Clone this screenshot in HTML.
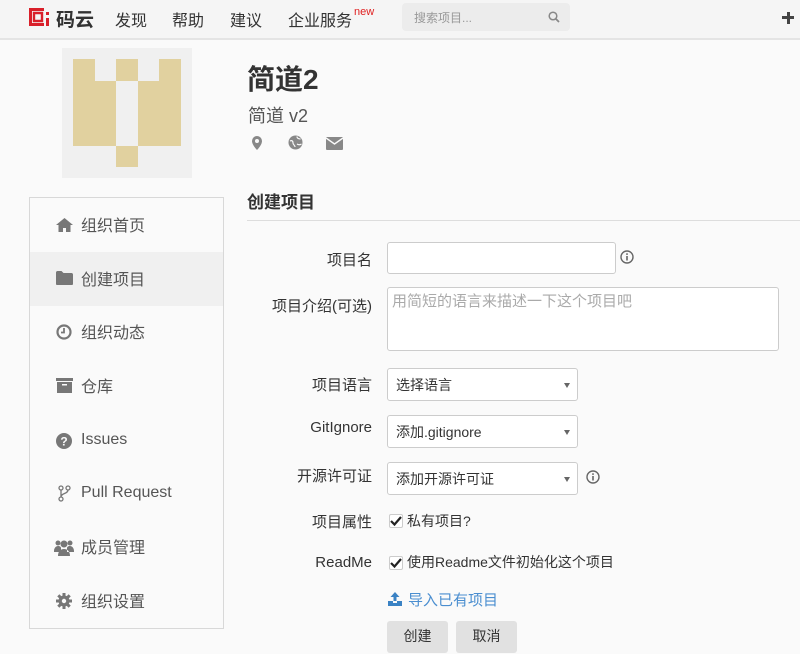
<!DOCTYPE html>
<html><head><meta charset="utf-8"><style>
*{box-sizing:border-box;margin:0;padding:0}
body{width:800px;height:654px;overflow:hidden;background:#fafafa;font-family:"Liberation Sans","Noto Sans CJK SC",sans-serif;color:#333;position:relative}
.a{position:absolute;white-space:nowrap}
.hdr{position:absolute;left:0;top:0;width:800px;height:40px;background:#f5f5f5;border-bottom:2px solid #e4e4e4}
.nav{font-size:16px;color:#333;top:7px}
.side{position:absolute;left:29px;top:197px;width:195px;height:432px;border:1px solid #d8d8d8;background:#fafafa}
.item{position:absolute;left:0;width:193px;height:54px;font-size:16px;color:#555}
.item span{position:absolute;left:51px;top:14px}
.item span.l{top:18px}
.item svg{position:absolute;left:26px;top:19px}
.lbl{font-size:15px;color:#333;text-align:right;width:140px;left:232px}
.inp{position:absolute;border:1px solid #ccc;border-radius:3px;background:#fff}
.sel{position:absolute;left:387px;width:191px;height:33px;border:1px solid #ccc;border-radius:3px;background:#fff;font-size:14px;color:#333;padding:6px 8px}
.sel:after{content:"";position:absolute;right:7px;top:14px;border-left:3px solid transparent;border-right:3px solid transparent;border-top:5px solid #666}
.cb{position:absolute;width:14px;height:14px;border:1px solid #ccc;border-radius:2px;background:#fff}
.btn{position:absolute;top:621px;height:32px;width:61px;background:#e1e1e1;border-radius:3px;font-size:14px;color:#333;text-align:center;line-height:30px}
</style></head><body>
<div class="hdr"></div>
<svg class="a" style="left:28px;top:7px" width="22" height="20" viewBox="0 0 22 20"><path d="M1 1h15v3H4v12h12v3H1z" fill="#d9202a"/><path d="M6 6h8v8H6z" fill="none" stroke="#d9202a" stroke-width="2.4"/><rect x="18" y="5" width="3" height="3" fill="#d9202a"/><rect x="18" y="11" width="3" height="8" fill="#d9202a"/></svg>
<div class="a" style="left:56px;top:5px;font-size:19px;color:#333;font-weight:bold">码云</div>
<div class="a nav" style="left:115px">发现</div>
<div class="a nav" style="left:172px">帮助</div>
<div class="a nav" style="left:230px">建议</div>
<div class="a nav" style="left:288px">企业服务</div>
<div class="a" style="left:354px;top:6px;font-size:11px;color:#e02020">new</div>
<div class="a" style="left:402px;top:3px;width:168px;height:28px;background:#ececec;border-radius:4px"></div>
<div class="a" style="left:414px;top:9px;font-size:12px;color:#999">搜索项目...</div>
<svg class="a" style="left:548px;top:11px" width="12" height="12" viewBox="0 0 12 12"><circle cx="5" cy="5" r="3.8" fill="none" stroke="#888" stroke-width="1.5"/><path d="M8 8l3 3" stroke="#888" stroke-width="1.8"/></svg>
<div class="a" style="left:782px;top:16px;width:12px;height:3px;background:#444"></div>
<div class="a" style="left:786.5px;top:11.5px;width:3px;height:12px;background:#444"></div>

<div class="a" style="left:62px;top:48px;width:130px;height:130px;background:#f0f0f0"></div>
<div class="a" style="left:73px;top:59px;width:21.6px;height:22px;background:#e1d19f"></div>
<div class="a" style="left:116.2px;top:59px;width:21.6px;height:22px;background:#e1d19f"></div>
<div class="a" style="left:159.4px;top:59px;width:21.6px;height:22px;background:#e1d19f"></div>
<div class="a" style="left:73px;top:81px;width:43.2px;height:64.8px;background:#e1d19f"></div>
<div class="a" style="left:137.8px;top:81px;width:43.2px;height:64.8px;background:#e1d19f"></div>
<div class="a" style="left:116.2px;top:145.6px;width:21.6px;height:21.6px;background:#e1d19f"></div>

<div class="a" style="left:247px;top:58px;font-size:28px;font-weight:bold;color:#333">简道2</div>
<div class="a" style="left:248px;top:102px;font-size:18px;color:#555">简道 v2</div>
<svg class="a" style="left:251px;top:135px" width="12" height="16" viewBox="0 0 12 16"><path d="M6 1a5 5 0 0 0-5 5c0 4 5 9 5 9s5-5 5-9a5 5 0 0 0-5-5z" fill="#888"/><circle cx="6" cy="6" r="2" fill="#fafafa"/></svg>
<svg class="a" style="left:288px;top:135px" width="15" height="15" viewBox="0 0 15 15"><circle cx="7.5" cy="7.5" r="7" fill="#888"/><path d="M2 6c2-1 3 0 3 2s2 2 2 4M9 1.5c0 2 2 2.5 3.5 2.5M9 9c1.5 1 3 1 4.5 0" stroke="#fafafa" stroke-width="1.2" fill="none"/></svg>
<svg class="a" style="left:326px;top:137px" width="17" height="13" viewBox="0 0 17 13"><rect x="0" y="0" width="17" height="13" rx="1" fill="#888"/><path d="M0 1l8.5 6L17 1" stroke="#fafafa" stroke-width="1.4" fill="none"/></svg>

<div class="a" style="left:247px;top:188px;font-size:17px;font-weight:bold;color:#333">创建项目</div>
<div class="a" style="left:247px;top:220px;width:553px;height:1px;background:#ddd"></div>

<div class="side">
<div class="item" style="top:0"><svg width="17" height="15" viewBox="0 0 17 15"><path d="M8.5 1L0 8h2.5v7h4.5v-4h3v4h4.5V8H17z" fill="#777"/></svg><span>组织首页</span></div>
<div class="item" style="top:54px;background:#f0f0f0"><svg width="17" height="14" viewBox="0 0 17 14"><path d="M0 1.5C0 .7.7 0 1.5 0h4l2 2h8c.8 0 1.5.7 1.5 1.5V13c0 .6-.4 1-1 1H1c-.6 0-1-.4-1-1z" fill="#777"/></svg><span>创建项目</span></div>
<div class="item" style="top:107px"><svg width="16" height="16" viewBox="0 0 16 16"><circle cx="8" cy="8" r="6.5" fill="none" stroke="#777" stroke-width="2.2"/><path d="M8 4v4.5H5" stroke="#777" stroke-width="1.8" fill="none"/></svg><span>组织动态</span></div>
<div class="item" style="top:161px"><svg width="17" height="15" viewBox="0 0 17 15"><rect x="0" y="0" width="17" height="3" fill="#777"/><rect x="1" y="4" width="15" height="11" fill="#777"/><rect x="6" y="6" width="5" height="1.5" fill="#fafafa"/></svg><span>仓库</span></div>
<div class="item" style="top:215px"><svg width="16" height="16" viewBox="0 0 16 16" style="top:20px"><circle cx="8" cy="8" r="8" fill="#777"/><text x="8" y="12.5" font-size="12" font-weight="bold" fill="#fafafa" text-anchor="middle" font-family="Liberation Sans">?</text></svg><span class="l">Issues</span></div>
<div class="item" style="top:268px"><svg width="16" height="17" viewBox="0 0 16 17" style="left:28px;top:19px"><circle cx="3" cy="3" r="2" fill="none" stroke="#777" stroke-width="1.3"/><circle cx="3" cy="14" r="2" fill="none" stroke="#777" stroke-width="1.3"/><circle cx="10" cy="3" r="2" fill="none" stroke="#777" stroke-width="1.3"/><path d="M3 5v7M10 5c0 4-7 3-7 7" stroke="#777" stroke-width="1.3" fill="none"/></svg><span class="l">Pull Request</span></div>
<div class="item" style="top:322px"><svg width="20" height="17" viewBox="0 0 20 17" style="left:24px"><circle cx="4" cy="4" r="2.5" fill="#777"/><circle cx="16" cy="4" r="2.5" fill="#777"/><circle cx="10" cy="5" r="3.5" fill="#777"/><path d="M0 12c0-3 2-5 4-5s3 1 3 2v4H0zM20 12c0-3-2-5-4-5s-3 1-3 2v4h7zM4 17c0-5 3-7 6-7s6 2 6 7z" fill="#777"/></svg><span>成员管理</span></div>
<div class="item" style="top:376px"><svg width="16" height="16" viewBox="0 0 16 16"><circle cx="8" cy="8" r="5.5" fill="#777"/><g stroke="#777" stroke-width="3"><path d="M8 0v16M0 8h16M2.3 2.3l11.4 11.4M13.7 2.3L2.3 13.7"/></g><circle cx="8" cy="8" r="2.2" fill="#fafafa"/></svg><span>组织设置</span></div>
</div>

<div class="a lbl" style="top:249px">项目名</div>
<div class="inp" style="left:387px;top:242px;width:229px;height:32px"></div>
<svg class="a" style="left:620px;top:250px" width="14" height="14" viewBox="0 0 14 14"><circle cx="7" cy="7" r="6" fill="none" stroke="#666" stroke-width="1.4"/><rect x="6.2" y="6" width="1.6" height="4.5" fill="#666"/><rect x="6.2" y="3.3" width="1.6" height="1.6" fill="#666"/></svg>
<div class="a lbl" style="top:295px">项目介绍(可选)</div>
<div class="inp" style="left:387px;top:287px;width:392px;height:64px"></div>
<div class="a" style="left:392px;top:290px;font-size:15px;color:#aaa">用简短的语言来描述一下这个项目吧</div>
<div class="a lbl" style="top:374px">项目语言</div>
<div class="sel" style="top:368px">选择语言</div>
<div class="a lbl" style="top:419px">GitIgnore</div>
<div class="sel" style="top:415px">添加.gitignore</div>
<div class="a lbl" style="top:465px">开源许可证</div>
<div class="sel" style="top:462px">添加开源许可证</div>
<svg class="a" style="left:586px;top:470px" width="14" height="14" viewBox="0 0 14 14"><circle cx="7" cy="7" r="6" fill="none" stroke="#666" stroke-width="1.4"/><rect x="6.2" y="6" width="1.6" height="4.5" fill="#666"/><rect x="6.2" y="3.3" width="1.6" height="1.6" fill="#666"/></svg>
<div class="a lbl" style="top:511px">项目属性</div>
<div class="cb" style="left:389px;top:514px"></div>
<svg class="a" style="left:389px;top:514px" width="14" height="13" viewBox="0 0 14 13"><path d="M2 7l3.5 3.5L12 3" stroke="#222" stroke-width="2.2" fill="none"/></svg>
<div class="a" style="left:407px;top:511px;font-size:14px;color:#333">私有项目?</div>
<div class="a lbl" style="top:554px">ReadMe</div>
<div class="cb" style="left:389px;top:556px"></div>
<svg class="a" style="left:389px;top:556px" width="14" height="13" viewBox="0 0 14 13"><path d="M2 7l3.5 3.5L12 3" stroke="#222" stroke-width="2.2" fill="none"/></svg>
<div class="a" style="left:407px;top:552px;font-size:14px;color:#333">使用Readme文件初始化这个项目</div>
<svg class="a" style="left:388px;top:592px" width="14" height="14" viewBox="0 0 14 14"><path d="M7 0L2.5 5h3v4h3V5h3z" fill="#3a82c4"/><path d="M0 9h5v2h4V9h5v5H0z" fill="#3a82c4"/></svg>
<div class="a" style="left:408px;top:589px;font-size:15px;color:#4a8ed0">导入已有项目</div>
<div class="btn" style="left:387px">创建</div>
<div class="btn" style="left:456px">取消</div>
</body></html>
